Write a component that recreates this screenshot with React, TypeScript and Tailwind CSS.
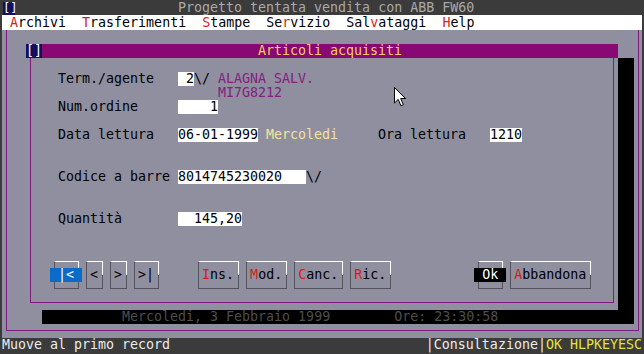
import React from "react";

const dark = "#54545e";

function Hot({ c }: { c: string }) {
  return <span className="text-[#d41c1c]">{c}</span>;
}

function Btn({
  hot = "",
  rest,
  className = "",
  hl = "",
}: {
  hot?: string;
  rest: string;
  className?: string;
  hl?: string;
}) {
  const label = (
    <>
      {hot && <Hot c={hot} />}
      {rest}
    </>
  );
  return (
    <div
      className={`border-t border-l border-b border-t-white border-l-[#54545e] border-b-[#54545e] pl-[3px] pr-[5px] pt-[6px] pb-[6px] leading-[14px] whitespace-pre bg-[linear-gradient(#ffffff_50%,#54545e_50%)] bg-no-repeat bg-right bg-[length:1px_100%] ${className}`}
    >
      {hl ? (
        <span className={`relative z-10 inline-block h-[14px] -mx-[8px] px-[8px] ${hl}`}>{label}</span>
      ) : (
        label
      )}
    </div>
  );
}

function Row({ children }: { children?: React.ReactNode }) {
  return <div className="h-[14px] flex items-start pl-[27px] whitespace-pre">{children}</div>;
}

function Label({ children }: { children: React.ReactNode }) {
  return <span className="w-[120px] text-black">{children}</span>;
}

function Field({ w, right, children }: { w: string; right?: boolean; children: React.ReactNode }) {
  return <span className={`${w} h-[14px] bg-white text-black ${right ? "text-right" : ""}`}>{children}</span>;
}

function Cursor() {
  return (
    <svg className="absolute left-[394px] top-[87px]" width="13" height="20" viewBox="0 0 13 20">
      <path d="M0.5 0.5 L0.5 16 L4.2 12.4 L7 18.8 L9.4 17.8 L6.7 11.5 L11.6 11.5 Z" fill="#fff" stroke="#000" strokeWidth="1" />
    </svg>
  );
}

export default function App() {
  return (
    <div className="relative w-[644px] h-[354px] overflow-hidden bg-[#3b3b3b] p-[2px] font-['DejaVu_Sans_Mono','Liberation_Mono',monospace] text-[13.3px] leading-[14px]">
      <div className="flex flex-col h-full">
        {/* title */}
        <div className="h-[13px] flex items-start">
          <span className="ml-[1px] w-[12px] h-[13px] bg-[#10105e] text-white text-[12px] leading-[13px] text-center">[]</span>
          <span className="ml-[163px] -mt-[1px] text-[#a9a9a9] whitespace-pre">Progetto tentata vendita con ABB FW60</span>
        </div>
        {/* menu */}
        <div className="h-[15px] bg-white text-black whitespace-pre pt-[1px] pl-[8px]">
          <Hot c="A" />rchivi  <Hot c="T" />rasferimenti  <Hot c="S" />tampe  Se<Hot c="r" />vizio  Sal<Hot c="v" />ataggi  <Hot c="H" />elp
        </div>
        {/* main */}
        <div className="h-[308px] bg-[#8f8f9f] pb-[7px] flex flex-col">
          <div className="flex-1 ml-[4px] mr-[3px] border-l border-r border-b border-[#801a80]">
            <div className="mt-[14px] ml-[19px] w-[592px] shadow-[16px_14px_0_0_#000]">
              <div className="h-[14px] flex">
                <span className="w-[16px] bg-[#10105e] text-white text-center">[]</span>
                <span className="flex-1 bg-[#880874] pl-[216px] text-[#fccd5e] whitespace-pre">Articoli acquisiti</span>
              </div>
              <div className="h-[252px] bg-[#8f8f9f] px-[4px] pb-[7px]">
                <div className="h-full border-l border-r border-b border-[#801a80] flex flex-col">
                  <Row />
                  <Row>
                    <Label>Term./agente</Label>
                    <Field w="w-[16px]" right>2</Field>
                    <span className="w-[24px] text-black">\/</span>
                    <span className="text-[#85207f]">ALAGNA SALV.</span>
                  </Row>
                  <Row>
                    <span className="w-[160px]" />
                    <span className="text-[#85207f]">MI7G8212</span>
                  </Row>
                  <Row>
                    <Label>Num.ordine</Label>
                    <Field w="w-[40px]" right>1</Field>
                  </Row>
                  <Row />
                  <Row>
                    <Label>Data lettura</Label>
                    <Field w="w-[80px]">06-01-1999</Field>
                    <span className="w-[8px]" />
                    <span className="w-[112px] text-[#f6e29c]">Mercoledi</span>
                    <span className="w-[112px] text-black">Ora lettura</span>
                    <Field w="w-[32px]">1210</Field>
                  </Row>
                  <Row />
                  <Row />
                  <Row>
                    <Label>Codice a barre</Label>
                    <Field w="w-[128px]">8014745230020</Field>
                    <span className="text-black">\/</span>
                  </Row>
                  <Row />
                  <Row />
                  <Row>
                    <Label>Quantità</Label>
                    <Field w="w-[64px]" right>145,20</Field>
                  </Row>
                  <Row />
                  <Row />
                  <div className="flex items-start pl-[23px] mt-[7px] text-black">
                    <Btn rest="|<" hl="bg-[#0b6bc9] text-white" />
                    <Btn rest="<" className="ml-[7px]" />
                    <Btn rest=">" className="ml-[7px]" />
                    <Btn rest=">|" className="ml-[7px]" />
                    <Btn hot="I" rest="ns." className="ml-[39px]" />
                    <Btn hot="M" rest="od." className="ml-[7px]" />
                    <Btn hot="C" rest="anc." className="ml-[7px]" />
                    <Btn hot="R" rest="ic." className="ml-[7px]" />
                    <Btn rest="Ok" className="ml-[87px]" hl="bg-black text-white" />
                    <Btn hot="A" rest="bbandona" className="ml-[7px]" />
                  </div>
                </div>
              </div>
            </div>
            <div className="h-[14px] pl-[115px] whitespace-pre text-[#4d4d4d]">
              Mercoledi, 3 Febbraio 1999        Ore: 23:30:58
            </div>
          </div>
        </div>
        {/* status */}
        <div className="h-[14px] flex whitespace-pre">
          <span className="text-[#ececec]">Muove al primo record</span>
          <span className="ml-auto text-[#ececec]">
            |Consultazione|<span className="text-[#e4e43c]">OK HLPKEYESC</span>
          </span>
        </div>
      </div>
      <Cursor />
    </div>
  );
}
